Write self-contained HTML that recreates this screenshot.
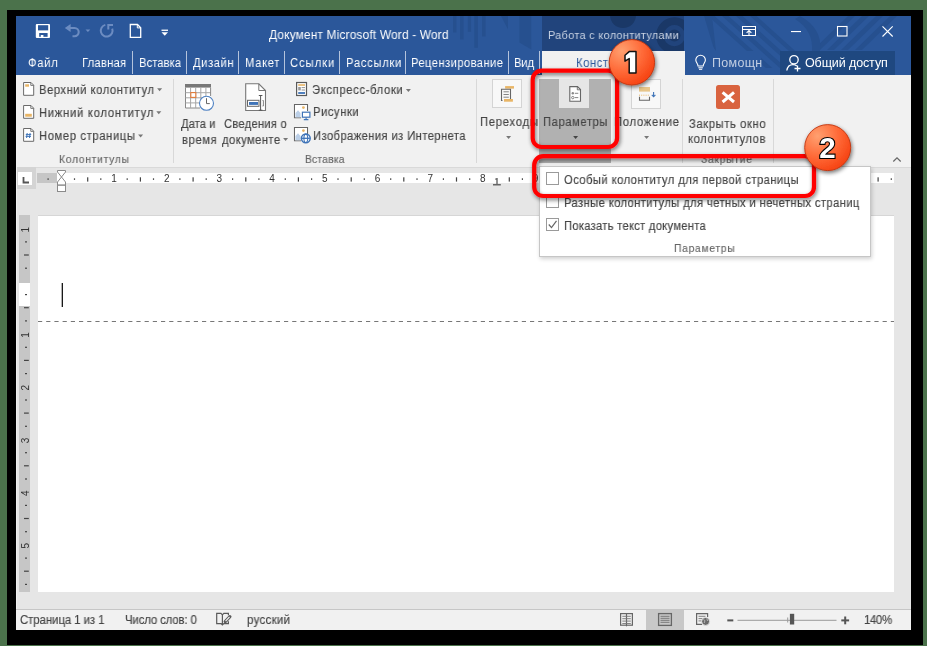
<!DOCTYPE html>
<html><head><meta charset="utf-8">
<style>
*{margin:0;padding:0;box-sizing:border-box}
html,body{width:927px;height:646px;overflow:hidden;background:#4b724b;font-family:"Liberation Sans",sans-serif;position:relative}
.a{position:absolute}
.t{position:absolute;white-space:nowrap;line-height:16px;height:16px;transform-origin:0 0;will-change:transform}
.k{-webkit-text-stroke:0.15px currentColor}
svg{position:absolute;overflow:visible}
</style></head><body>
<div class="a" style="left:7px;top:10px;width:916px;height:635px;background:#000"></div>
<div class="a" style="left:16px;top:16px;width:895px;height:614px;background:#e6e6e6"></div>
<div class="a" style="left:16px;top:16px;width:895px;height:59px;background:#2b579a"></div>
<svg style="left:0;top:0" width="927" height="646"><defs><clipPath id="tb"><rect x="16" y="16" width="895" height="59"/></clipPath>
<clipPath id="tb2"><rect x="16" y="16" width="895" height="35"/><rect x="761" y="51" width="19" height="17"/></clipPath><clipPath id="curv"><path d="M704,16 Q707,40 716,51 L716,68 L800,68 L800,16 Z"/></clipPath></defs>
<g clip-path="url(#tb)" fill="#26508f">
<rect x="453" y="16" width="3.5" height="16.5"/><rect x="460" y="16" width="3.6" height="23.5"/><rect x="467.8" y="16" width="3.3" height="15.8"/>
<rect x="474.3" y="16" width="3.6" height="31.8"/><rect x="482" y="16" width="3.6" height="20.5"/>
<polygon points="501,16 508,16 508,29.4"/>
<polygon points="519.4,16 531.3,16 531.3,49.6 519.4,42.5"/>
</g>
<g clip-path="url(#tb2)">
<g clip-path="url(#curv)" fill="#26508f">
<path d="M704,16 Q707,40 716,51 L800,51 L800,16 Z" fill="#26508f" opacity="0.0"/>
<polygon points="708,16 714.5,16 781.2,76 774.7,76"/>
<polygon points="722,16 728.5,16 795.2,76 788.7,76"/>
<polygon points="736,16 742.5,16 809.2,76 802.7,76"/>
<polygon points="750,16 756.5,16 823.2,76 816.7,76"/>
<polygon points="704,16 712,16 716,51 714.6,51" />
</g>
<polygon points="848,16 855,16 820,50 813,50" fill="#26508f"/>
<polygon points="862,16 869,16 834,50 827,50" fill="#26508f"/>
<polygon points="876,16 883,16 848,50 841,50" fill="#26508f"/>
<polygon points="890,16 897,16 862,50 855,50" fill="#26508f"/>
<path d="M800,16 C815,24 822,36 820,51 L812,51 C813,38 808,27 795,19 Z" fill="#26508f"/>
</g></svg>
<div class="a" style="left:542px;top:16px;width:142px;height:35px;background:#21447c"></div>
<svg style="left:0;top:0" width="927" height="646"><defs><clipPath id="ctxc"><rect x="542" y="16" width="142" height="35"/></clipPath></defs><g clip-path="url(#ctxc)" fill="#1a3867"><circle cx="623" cy="15" r="13"/><path d="M674.4,17.3 a18.3,18.3 0 1 0 0.01,0 Z M674.4,25 a10.6,10.6 0 1 1 -0.01,0 Z" fill-rule="evenodd"/><circle cx="674.4" cy="35.6" r="6"/></g></svg>
<div class="t" style="left:269.00px;top:27.40px;font-size:12.5px;color:#ffffff;letter-spacing:0.187px;transform:scaleX(0.95)">Документ Microsoft Word - Word</div>
<div class="t" style="left:547.65px;top:26.90px;font-size:11.5px;color:#c9d3e3;letter-spacing:0.318px;transform:scaleX(0.95)">Работа с колонтитулами</div>
<svg style="left:0;top:0" width="927" height="646">
<!-- save -->
<rect x="35.8" y="24" width="14.2" height="14" rx="1" fill="#fff"/>
<rect x="38" y="25.2" width="10.2" height="5.2" fill="#2b579a"/>
<rect x="39.2" y="33" width="8.4" height="3.8" fill="#2b579a"/>
<rect x="40.8" y="35" width="2.6" height="3" fill="#fff"/>
<!-- undo -->
<path d="M64.8,28 L70.6,24 V32 Z" fill="#6c8cc1"/>
<path d="M69.5,28 H74.6 A4.1,4.1 0 0 1 74.6,36.2 H72.5" fill="none" stroke="#6c8cc1" stroke-width="2.1"/>
<path d="M85.5,29.4 H90.3 L87.9,31.9 Z" fill="#6c8cc1"/>
<!-- redo circle -->
<path d="M105.3,24.9 A5.9,5.9 0 1 0 112.2,28.6" fill="none" stroke="#6c8cc1" stroke-width="2"/>
<path d="M108.3,29.6 V25 H113" fill="none" stroke="#6c8cc1" stroke-width="2"/>
<!-- new doc -->
<path d="M130.3,24.5 H137.5 L140.7,27.7 V37.3 H130.3 Z" fill="none" stroke="#fff" stroke-width="1.3"/>
<path d="M137.3,24.5 V27.9 H140.7" fill="none" stroke="#fff" stroke-width="1"/>
<!-- customize -->
<rect x="161.5" y="29.6" width="6.5" height="1.3" fill="#fff"/>
<path d="M161.5,32.2 H168 L164.75,35.8 Z" fill="#fff"/>
<!-- window controls -->
<rect x="742.5" y="26.5" width="13" height="9" fill="none" stroke="#fff" stroke-width="1"/>
<path d="M743,29.5 H755" stroke="#fff" stroke-width="1"/>
<path d="M749,35.5 V30.6 M746.6,32.9 L749,30.5 L751.4,32.9" fill="none" stroke="#fff" stroke-width="1.1"/>
<rect x="791" y="31" width="10" height="1.1" fill="#fff"/>
<rect x="837.5" y="26.5" width="9.5" height="9.5" fill="none" stroke="#fff" stroke-width="1.1"/>
<path d="M882.5,26.3 L892.7,36.5 M892.7,26.3 L882.5,36.5" stroke="#fff" stroke-width="1.1"/>
</svg>
<div class="t" style="left:28.40px;top:55.30px;font-size:12.5px;color:#ffffff;letter-spacing:0.778px;transform:scaleX(0.9)">Файл</div>
<div class="t" style="left:81.90px;top:55.30px;font-size:12.5px;color:#ffffff;letter-spacing:0.241px;transform:scaleX(0.9)">Главная</div>
<div class="t" style="left:138.60px;top:55.30px;font-size:12.5px;color:#ffffff;letter-spacing:0.056px;transform:scaleX(0.9)">Вставка</div>
<div class="t" style="left:192.90px;top:55.30px;font-size:12.5px;color:#ffffff;letter-spacing:0.622px;transform:scaleX(0.9)">Дизайн</div>
<div class="t" style="left:244.90px;top:55.30px;font-size:12.5px;color:#ffffff;letter-spacing:0.722px;transform:scaleX(0.9)">Макет</div>
<div class="t" style="left:290.30px;top:55.30px;font-size:12.5px;color:#ffffff;letter-spacing:1.044px;transform:scaleX(0.9)">Ссылки</div>
<div class="t" style="left:345.50px;top:55.30px;font-size:12.5px;color:#ffffff;letter-spacing:0.778px;transform:scaleX(0.9)">Рассылки</div>
<div class="t" style="left:411.40px;top:55.30px;font-size:12.5px;color:#ffffff;letter-spacing:0.436px;transform:scaleX(0.9)">Рецензирование</div>
<div class="t" style="left:514.40px;top:55.30px;font-size:12.5px;color:#ffffff;letter-spacing:-0.222px;transform:scaleX(0.9)">Вид</div>
<div class="a" style="left:131.9px;top:51px;width:1px;height:23px;background:#b4c3dc"></div>
<div class="a" style="left:186.2px;top:51px;width:1px;height:23px;background:#b4c3dc"></div>
<div class="a" style="left:238.3px;top:51px;width:1px;height:23px;background:#b4c3dc"></div>
<div class="a" style="left:284.3px;top:51px;width:1px;height:23px;background:#b4c3dc"></div>
<div class="a" style="left:339.2px;top:51px;width:1px;height:23px;background:#b4c3dc"></div>
<div class="a" style="left:405.4px;top:51px;width:1px;height:23px;background:#b4c3dc"></div>
<div class="a" style="left:508.1px;top:51px;width:1px;height:23px;background:#b4c3dc"></div>
<div class="a" style="left:539.2px;top:51px;width:1px;height:23px;background:#b4c3dc"></div>
<div class="a" style="left:542px;top:51px;width:143px;height:25px;background:#f1f1f1"></div>
<div class="t" style="left:576.10px;top:55.30px;font-size:12.5px;color:#2b579a;letter-spacing:0.600px;transform:scaleX(0.9)">Конструктор</div>
<svg style="left:0;top:0" width="927" height="646">
<path d="M698,66 C698,63.5 695.8,62.5 695.8,60 A4.8,4.8 0 0 1 705.4,60 C705.4,62.5 703.2,63.5 703.2,66 Z" fill="none" stroke="#fff" stroke-width="1.1"/>
<path d="M698.3,67.8 H702.9 M699,69.3 H702.2" stroke="#fff" stroke-width="1"/>
</svg>
<div class="t" style="left:711.50px;top:54.90px;font-size:12.5px;color:#c3cfe3;letter-spacing:0.300px;transform:scaleX(1.0)">Помощн</div>
<div class="a" style="left:780px;top:51px;width:115px;height:24px;background:#1f4880"></div>
<svg style="left:0;top:0" width="927" height="646">
<circle cx="794" cy="59.8" r="4.2" fill="none" stroke="#fff" stroke-width="1.3"/>
<path d="M786.8,70.5 C787.5,66.5 789.5,64.6 793,64.6 C794.8,64.6 796,65.2 796.8,66" fill="none" stroke="#fff" stroke-width="1.3"/>
<path d="M797.5,65.5 V71.5 M794.5,68.5 H800.5" stroke="#fff" stroke-width="1.3"/>
</svg>
<div class="t" style="left:805.00px;top:54.90px;font-size:12.5px;color:#ffffff;letter-spacing:-0.109px;transform:scaleX(1.0)">Общий доступ</div>
<div class="a" style="left:16px;top:75px;width:895px;height:93px;background:#f1f1f1;border-bottom:1px solid #d9d9d9"></div>
<div class="a" style="left:173.0px;top:79px;width:1px;height:84px;background:#d8d8d8"></div>
<div class="a" style="left:475.8px;top:79px;width:1px;height:84px;background:#d8d8d8"></div>
<div class="a" style="left:681.9px;top:79px;width:1px;height:84px;background:#d8d8d8"></div>
<div class="a" style="left:772.7px;top:79px;width:1px;height:84px;background:#d8d8d8"></div>
<div class="t k" style="left:39.30px;top:82.00px;font-size:12.5px;color:#444444;letter-spacing:0.569px;transform:scaleX(0.9)">Верхний колонтитул</div>
<div class="t k" style="left:39.30px;top:104.50px;font-size:12.5px;color:#444444;letter-spacing:0.806px;transform:scaleX(0.9)">Нижний колонтитул</div>
<div class="t k" style="left:39.30px;top:127.80px;font-size:12.5px;color:#444444;letter-spacing:0.675px;transform:scaleX(0.9)">Номер страницы</div>
<div class="t k" style="left:58.60px;top:151.00px;font-size:11.5px;color:#666666;letter-spacing:0.778px;transform:scaleX(0.9)">Колонтитулы</div>
<div class="t k" style="left:181.20px;top:115.90px;font-size:12.5px;color:#444444;letter-spacing:0.022px;transform:scaleX(0.9)">Дата и</div>
<div class="t k" style="left:181.60px;top:131.90px;font-size:12.5px;color:#444444;letter-spacing:0.667px;transform:scaleX(0.9)">время</div>
<div class="t k" style="left:223.60px;top:115.90px;font-size:12.5px;color:#444444;letter-spacing:0.235px;transform:scaleX(0.9)">Сведения о</div>
<div class="t k" style="left:222.00px;top:131.90px;font-size:12.5px;color:#444444;letter-spacing:0.458px;transform:scaleX(0.9)">документе</div>
<div class="t k" style="left:312.00px;top:81.50px;font-size:12.5px;color:#444444;letter-spacing:0.709px;transform:scaleX(0.9)">Экспресс-блоки</div>
<div class="t k" style="left:312.80px;top:104.40px;font-size:12.5px;color:#444444;letter-spacing:0.593px;transform:scaleX(0.9)">Рисунки</div>
<div class="t k" style="left:312.80px;top:127.70px;font-size:12.5px;color:#444444;letter-spacing:0.430px;transform:scaleX(0.9)">Изображения из Интернета</div>
<div class="t k" style="left:304.60px;top:150.50px;font-size:11.5px;color:#666666;letter-spacing:0.185px;transform:scaleX(0.9)">Вставка</div>
<svg style="left:0;top:0" width="927" height="646"><path d="M157.1,88.2 H162.1 L159.6,91.2 Z" fill="#777"/><path d="M156.3,111.3 H161.3 L158.8,114.3 Z" fill="#777"/><path d="M138.1,134.6 H143.1 L140.6,137.6 Z" fill="#777"/><path d="M283.1,138.1 H288.1 L285.6,141.1 Z" fill="#777"/><path d="M405.9,89.0 H410.9 L408.4,92.0 Z" fill="#777"/><path d="M23.6,82.5 H31 L33.7,85.2 V95.3 H23.6 Z" fill="#fff" stroke="#6a6a6a" stroke-width="1"/><path d="M30.8,82.5 V85.4 H33.7" fill="none" stroke="#6a6a6a" stroke-width="0.9"/><path d="M23.6,105.5 H31 L33.7,108.2 V118.3 H23.6 Z" fill="#fff" stroke="#6a6a6a" stroke-width="1"/><path d="M30.8,105.5 V108.4 H33.7" fill="none" stroke="#6a6a6a" stroke-width="0.9"/><path d="M23.6,128.5 H31 L33.7,131.2 V141.3 H23.6 Z" fill="#fff" stroke="#6a6a6a" stroke-width="1"/><path d="M30.8,128.5 V131.4 H33.7" fill="none" stroke="#6a6a6a" stroke-width="0.9"/><rect x="25.2" y="84.3" width="3.8" height="2.4" fill="#e8b566"/><rect x="25.2" y="113.8" width="6.6" height="2.9" fill="#e8b566"/><path d="M27.2,133 L26.6,138 M30.1,133 L29.5,138 M25.8,134.6 H31.2 M25.6,136.4 H31" stroke="#3f74b8" stroke-width="1"/><rect x="185.5" y="87" width="25.2" height="21" fill="#fff"/><rect x="185" y="84" width="26" height="3.6" fill="#777"/><path d="M185.5,87.5 V108 H200 M185,108.5" fill="none" stroke="#888" stroke-width="1"/><path d="M190.6,87.6 V108" stroke="#a6a6a6" stroke-width="1"/><path d="M195.7,87.6 V108" stroke="#a6a6a6" stroke-width="1"/><path d="M200.8,87.6 V108" stroke="#a6a6a6" stroke-width="1"/><path d="M205.9,87.6 V108" stroke="#a6a6a6" stroke-width="1"/><path d="M185.5,92.7 H211" stroke="#a6a6a6" stroke-width="1"/><path d="M185.5,97.8 H211" stroke="#a6a6a6" stroke-width="1"/><path d="M185.5,102.9 H211" stroke="#a6a6a6" stroke-width="1"/><path d="M210.6,87.6 V96" stroke="#888" stroke-width="1"/><rect x="190.8" y="92.6" width="5" height="4.8" fill="#fff" stroke="#e07b39" stroke-width="1.1"/><circle cx="206.5" cy="103.3" r="7" fill="#fff" stroke="#4f82c3" stroke-width="1.1"/><path d="M206.5,98.2 V103.6 H209.8" fill="none" stroke="#666" stroke-width="1"/><path d="M245.7,83.8 H258.8 L265.5,90.5 V110.5 H245.7 Z" fill="#fff" stroke="#777" stroke-width="1.1"/><path d="M258.8,83.8 V90.5 H265.5" fill="none" stroke="#777" stroke-width="1"/><rect x="247.5" y="100.3" width="11.5" height="6" fill="#fff" stroke="#666" stroke-width="1"/><rect x="249" y="102" width="9" height="2.9" fill="#3f74b8"/><path d="M258.8,95.5 H262.4 M260.6,95.5 V110.2 M258.8,110.2 H262.4" fill="none" stroke="#555" stroke-width="1"/><path d="M262.5,100.5 H263.4 V106 H262.5" fill="none" stroke="#777" stroke-width="0.9"/><rect x="296.6" y="82.5" width="9.9" height="13" fill="#fff" stroke="#5a5a5a" stroke-width="1.2"/><rect x="298.2" y="84.2" width="6.8" height="1.6" fill="#e8b566"/><rect x="298.2" y="87" width="2.6" height="3.4" fill="#999"/><path d="M301.6,87.6 H305 M301.6,90 H305" stroke="#888" stroke-width="0.9"/><rect x="298.2" y="92.1" width="6.8" height="1.8" fill="#3f74b8"/><path d="M301,117.7 H294.5 V104.5 H307.5 V111" fill="#fff" stroke="#666" stroke-width="1.1"/><rect x="295.1" y="105.1" width="11.8" height="12" fill="#fff"/><circle cx="303.4" cy="107.6" r="1.4" fill="#e8b566"/><path d="M295.5,117.2 V113 L298,110.2 L300.5,113 V117.2 Z" fill="#bcd0e8"/><path d="M301,140.7 H294.5 V127.5 H307.5 V134" fill="#fff" stroke="#666" stroke-width="1.1"/><rect x="295.1" y="128.1" width="11.8" height="12" fill="#fff"/><circle cx="303.4" cy="130.6" r="1.4" fill="#e8b566"/><path d="M295.5,140.2 V136 L298,133.2 L300.5,136 V140.2 Z" fill="#bcd0e8"/><rect x="302.4" y="112.2" width="7.5" height="5" fill="#fff" stroke="#3f74b8" stroke-width="1.2"/><path d="M306.1,117.5 V119.3 M303.8,119.6 H308.4" stroke="#3f74b8" stroke-width="1.1"/><circle cx="305.8" cy="138.3" r="4.4" fill="#fff" stroke="#3f74b8" stroke-width="1.5"/><path d="M301.8,138.3 H309.8" stroke="#3f74b8" stroke-width="1.3"/><ellipse cx="305.8" cy="138.3" rx="1.9" ry="4.2" fill="none" stroke="#3f74b8" stroke-width="1.1"/></svg>
<div class="a" style="left:492.4px;top:79.3px;width:29.4px;height:29px;background:#f8f8f8;border:1px solid #d4d4d4"></div>
<div class="a" style="left:631.2px;top:79.3px;width:29.4px;height:29.5px;background:#f8f8f8;border:1px solid #d4d4d4"></div>
<div class="a" style="left:539.4px;top:79px;width:71.4px;height:84px;background:#b1b1b1"></div>
<div class="a" style="left:559.4px;top:79px;width:29.2px;height:29.3px;background:#e6e6e6"></div>
<div class="t k" style="left:479.60px;top:113.80px;font-size:12.5px;color:#444444;letter-spacing:0.825px;transform:scaleX(0.9)">Переходы</div>
<div class="t k" style="left:542.70px;top:113.80px;font-size:12.5px;color:#444444;letter-spacing:0.611px;transform:scaleX(0.9)">Параметры</div>
<div class="t k" style="left:614.00px;top:113.80px;font-size:12.5px;color:#444444;letter-spacing:0.778px;transform:scaleX(0.9)">Положение</div>
<div class="t k" style="left:688.90px;top:115.80px;font-size:12.5px;color:#444444;letter-spacing:0.657px;transform:scaleX(0.9)">Закрыть окно</div>
<div class="t k" style="left:688.30px;top:131.30px;font-size:12.5px;color:#444444;letter-spacing:0.626px;transform:scaleX(0.9)">колонтитулов</div>
<div class="t k" style="left:701.10px;top:150.50px;font-size:11.5px;color:#666666;letter-spacing:0.794px;transform:scaleX(0.9)">Закрытие</div>
<svg style="left:0;top:0" width="927" height="646"><path d="M506.1,136.1 H511.1 L508.6,139.1 Z" fill="#777"/><path d="M573.1,136.1 H578.1 L575.6,139.1 Z" fill="#444"/><path d="M644.1,136.1 H649.1 L646.6,139.1 Z" fill="#777"/><rect x="505.1" y="86.1" width="8.9" height="2.5" fill="#e8b566"/><rect x="504" y="99" width="8.9" height="2.7" fill="#e8b566"/><path d="M502.5,100.5 H501.5 V89.3 H510.5 V99" fill="none" stroke="#666" stroke-width="1.1"/><path d="M503.5,91.8 H508.8 M503.5,94.5 H508.8 M503.5,97.2 H508.8" stroke="#777" stroke-width="0.9"/><path d="M569.8,86.6 H577.5 L580.5,89.6 V101.2 H569.8 Z" fill="#fff" stroke="#666" stroke-width="1.1"/><path d="M577.3,86.6 V89.8 H580.5" fill="none" stroke="#666" stroke-width="0.9"/><circle cx="572.8" cy="93.3" r="1.2" fill="#888"/><circle cx="572.8" cy="97.6" r="1.2" fill="none" stroke="#777" stroke-width="0.9"/><path d="M574.8,93.3 H578.3 M574.8,97.6 H578.3" stroke="#777" stroke-width="0.9"/><rect x="639" y="87" width="11" height="4.6" fill="#e8c68a"/><path d="M639,95.2 H650" stroke="#e8b566" stroke-width="1" stroke-dasharray="1,1.2"/><path d="M639.5,96.8 V100.3 H649.5 V96.8" fill="none" stroke="#666" stroke-width="1.1"/><path d="M653.6,92 V96.5 M651.8,94.8 L653.6,96.8 L655.4,94.8" fill="none" stroke="#3f74b8" stroke-width="1.1"/><rect x="716" y="85.1" width="24" height="24" rx="2.5" fill="#d9633f"/><path d="M722.6,92.3 L734,102 M734,92.3 L722.6,102" stroke="#fff" stroke-width="3"/><path d="M893.3,161.5 L897,157.8 L900.7,161.5" fill="none" stroke="#666" stroke-width="1.2"/></svg>
<div class="a" style="left:17px;top:167.3px;width:18.8px;height:21.3px;background:#d4d4d4"></div>
<div class="a" style="left:18px;top:172px;width:14px;height:13px;background:#fff"></div>
<div class="a" style="left:16px;top:167px;width:1px;height:442px;background:#f0f0f0"></div>
<div class="a" style="left:37px;top:173px;width:20px;height:10px;background:#c6c6c6"></div>
<div class="a" style="left:57px;top:173px;width:837px;height:10px;background:#fff"></div>
<div class="a" style="left:19px;top:215px;width:11px;height:377px;background:#c6c6c6"></div>
<div class="a" style="left:19px;top:282.5px;width:11px;height:23px;background:#fff"></div>
<div class="a" style="left:38px;top:216px;width:856px;height:376px;background:#fff"></div>
<div class="a" style="left:38px;top:215px;width:856px;height:1px;background:#d6d6d6"></div>
<svg style="left:0;top:0" width="927" height="646"><path d="M23.5,177 V182.5 H29" fill="none" stroke="#555" stroke-width="1.8"/><rect x="47.5" y="178.3" width="1.2" height="1.6" fill="#444"/><rect x="73.9" y="178.3" width="1.2" height="1.6" fill="#444"/><rect x="87.1" y="177.3" width="1.2" height="4.3" fill="#444"/><rect x="100.2" y="178.3" width="1.2" height="1.6" fill="#444"/><text x="114.0" y="181.8" font-family="Liberation Sans" font-size="10" fill="#333" text-anchor="middle">1</text><rect x="126.6" y="178.3" width="1.2" height="1.6" fill="#444"/><rect x="139.8" y="177.3" width="1.2" height="4.3" fill="#444"/><rect x="152.9" y="178.3" width="1.2" height="1.6" fill="#444"/><text x="166.7" y="181.8" font-family="Liberation Sans" font-size="10" fill="#333" text-anchor="middle">2</text><rect x="179.3" y="178.3" width="1.2" height="1.6" fill="#444"/><rect x="192.5" y="177.3" width="1.2" height="4.3" fill="#444"/><rect x="205.6" y="178.3" width="1.2" height="1.6" fill="#444"/><text x="219.4" y="181.8" font-family="Liberation Sans" font-size="10" fill="#333" text-anchor="middle">3</text><rect x="232.0" y="178.3" width="1.2" height="1.6" fill="#444"/><rect x="245.2" y="177.3" width="1.2" height="4.3" fill="#444"/><rect x="258.3" y="178.3" width="1.2" height="1.6" fill="#444"/><text x="272.1" y="181.8" font-family="Liberation Sans" font-size="10" fill="#333" text-anchor="middle">4</text><rect x="284.7" y="178.3" width="1.2" height="1.6" fill="#444"/><rect x="297.8" y="177.3" width="1.2" height="4.3" fill="#444"/><rect x="311.0" y="178.3" width="1.2" height="1.6" fill="#444"/><text x="324.8" y="181.8" font-family="Liberation Sans" font-size="10" fill="#333" text-anchor="middle">5</text><rect x="337.4" y="178.3" width="1.2" height="1.6" fill="#444"/><rect x="350.6" y="177.3" width="1.2" height="4.3" fill="#444"/><rect x="363.7" y="178.3" width="1.2" height="1.6" fill="#444"/><text x="377.5" y="181.8" font-family="Liberation Sans" font-size="10" fill="#333" text-anchor="middle">6</text><rect x="390.1" y="178.3" width="1.2" height="1.6" fill="#444"/><rect x="403.2" y="177.3" width="1.2" height="4.3" fill="#444"/><rect x="416.4" y="178.3" width="1.2" height="1.6" fill="#444"/><text x="430.2" y="181.8" font-family="Liberation Sans" font-size="10" fill="#333" text-anchor="middle">7</text><rect x="442.8" y="178.3" width="1.2" height="1.6" fill="#444"/><rect x="455.9" y="177.3" width="1.2" height="4.3" fill="#444"/><rect x="469.1" y="178.3" width="1.2" height="1.6" fill="#444"/><text x="482.9" y="181.8" font-family="Liberation Sans" font-size="10" fill="#333" text-anchor="middle">8</text><rect x="495.5" y="178.3" width="1.2" height="1.6" fill="#444"/><rect x="508.7" y="177.3" width="1.2" height="4.3" fill="#444"/><rect x="521.8" y="178.3" width="1.2" height="1.6" fill="#444"/><text x="535.6" y="181.8" font-family="Liberation Sans" font-size="10" fill="#333" text-anchor="middle">9</text><rect x="548.2" y="178.3" width="1.2" height="1.6" fill="#444"/><rect x="561.4" y="177.3" width="1.2" height="4.3" fill="#444"/><rect x="574.5" y="178.3" width="1.2" height="1.6" fill="#444"/><text x="588.3" y="181.8" font-family="Liberation Sans" font-size="10" fill="#333" text-anchor="middle">10</text><rect x="600.9" y="178.3" width="1.2" height="1.6" fill="#444"/><rect x="614.0" y="177.3" width="1.2" height="4.3" fill="#444"/><rect x="627.2" y="178.3" width="1.2" height="1.6" fill="#444"/><text x="641.0" y="181.8" font-family="Liberation Sans" font-size="10" fill="#333" text-anchor="middle">11</text><rect x="653.6" y="178.3" width="1.2" height="1.6" fill="#444"/><rect x="666.8" y="177.3" width="1.2" height="4.3" fill="#444"/><rect x="679.9" y="178.3" width="1.2" height="1.6" fill="#444"/><text x="693.7" y="181.8" font-family="Liberation Sans" font-size="10" fill="#333" text-anchor="middle">12</text><rect x="706.3" y="178.3" width="1.2" height="1.6" fill="#444"/><rect x="719.4" y="177.3" width="1.2" height="4.3" fill="#444"/><rect x="732.6" y="178.3" width="1.2" height="1.6" fill="#444"/><text x="746.4" y="181.8" font-family="Liberation Sans" font-size="10" fill="#333" text-anchor="middle">13</text><rect x="759.0" y="178.3" width="1.2" height="1.6" fill="#444"/><rect x="772.1" y="177.3" width="1.2" height="4.3" fill="#444"/><rect x="785.3" y="178.3" width="1.2" height="1.6" fill="#444"/><text x="799.1" y="181.8" font-family="Liberation Sans" font-size="10" fill="#333" text-anchor="middle">14</text><rect x="811.7" y="178.3" width="1.2" height="1.6" fill="#444"/><rect x="824.9" y="177.3" width="1.2" height="4.3" fill="#444"/><rect x="838.0" y="178.3" width="1.2" height="1.6" fill="#444"/><text x="851.8" y="181.8" font-family="Liberation Sans" font-size="10" fill="#333" text-anchor="middle">15</text><rect x="864.4" y="178.3" width="1.2" height="1.6" fill="#444"/><rect x="877.5" y="177.3" width="1.2" height="4.3" fill="#444"/><rect x="890.7" y="178.3" width="1.2" height="1.6" fill="#444"/><path d="M57.5,170.5 H65.5 V172 L61.5,177 L65.5,182 V185 H57.5 V182 L61.5,177 L57.5,172 Z" fill="#fff" stroke="#8a8a8a" stroke-width="1"/><rect x="57.5" y="185.3" width="8" height="6.2" fill="#fff" stroke="#8a8a8a" stroke-width="1"/><text x="0" y="0" transform="translate(28.6,229.6) rotate(-90)" font-family="Liberation Sans" font-size="10" fill="#333" text-anchor="middle">1</text><rect x="25" y="241.3" width="2" height="1.2" fill="#444"/><rect x="24" y="254.4" width="4.8" height="1.2" fill="#444"/><rect x="25" y="267.6" width="2" height="1.2" fill="#444"/><rect x="25" y="294.0" width="2" height="1.2" fill="#444"/><rect x="24" y="307.1" width="4.8" height="1.2" fill="#444"/><rect x="25" y="320.3" width="2" height="1.2" fill="#444"/><text x="0" y="0" transform="translate(28.6,335.0) rotate(-90)" font-family="Liberation Sans" font-size="10" fill="#333" text-anchor="middle">1</text><rect x="25" y="346.7" width="2" height="1.2" fill="#444"/><rect x="24" y="359.8" width="4.8" height="1.2" fill="#444"/><rect x="25" y="373.0" width="2" height="1.2" fill="#444"/><text x="0" y="0" transform="translate(28.6,387.7) rotate(-90)" font-family="Liberation Sans" font-size="10" fill="#333" text-anchor="middle">2</text><rect x="25" y="399.4" width="2" height="1.2" fill="#444"/><rect x="24" y="412.5" width="4.8" height="1.2" fill="#444"/><rect x="25" y="425.7" width="2" height="1.2" fill="#444"/><text x="0" y="0" transform="translate(28.6,440.4) rotate(-90)" font-family="Liberation Sans" font-size="10" fill="#333" text-anchor="middle">3</text><rect x="25" y="452.1" width="2" height="1.2" fill="#444"/><rect x="24" y="465.2" width="4.8" height="1.2" fill="#444"/><rect x="25" y="478.4" width="2" height="1.2" fill="#444"/><text x="0" y="0" transform="translate(28.6,493.1) rotate(-90)" font-family="Liberation Sans" font-size="10" fill="#333" text-anchor="middle">4</text><rect x="25" y="504.8" width="2" height="1.2" fill="#444"/><rect x="24" y="517.9" width="4.8" height="1.2" fill="#444"/><rect x="25" y="531.1" width="2" height="1.2" fill="#444"/><text x="0" y="0" transform="translate(28.6,545.8) rotate(-90)" font-family="Liberation Sans" font-size="10" fill="#333" text-anchor="middle">5</text><rect x="25" y="557.5" width="2" height="1.2" fill="#444"/><rect x="24" y="570.6" width="4.8" height="1.2" fill="#444"/><rect x="25" y="583.8" width="2" height="1.2" fill="#444"/><path d="M497,178 V184.7 M493,184.8 H500.8" fill="none" stroke="#666" stroke-width="1.4"/><rect x="61.7" y="283" width="1.2" height="24" fill="#000"/><path d="M38,321.5 H894" stroke="#777" stroke-width="1" stroke-dasharray="4.2,4"/></svg>
<div class="a" style="left:16px;top:609px;width:895px;height:21px;background:#f1f1f1;border-top:1px solid #c6c6c6"></div>
<div class="a" style="left:646px;top:610px;width:38px;height:20px;background:#c8c8c8"></div>
<div class="t k" style="left:20.45px;top:612.20px;font-size:12px;color:#444444;letter-spacing:-0.071px;transform:scaleX(0.95)">Страница 1 из 1</div>
<div class="t k" style="left:124.65px;top:612.20px;font-size:12px;color:#444444;letter-spacing:-0.149px;transform:scaleX(0.95)">Число слов: 0</div>
<div class="t k" style="left:246.65px;top:612.20px;font-size:12px;color:#444444;letter-spacing:0.377px;transform:scaleX(0.95)">русский</div>
<div class="t k" style="left:863.55px;top:612.20px;font-size:12px;color:#444444;letter-spacing:-0.368px;transform:scaleX(0.95)">140%</div>
<svg style="left:0;top:0" width="927" height="646"><path d="M222.4,614.8 L221,613.4 H216.7 V623.6 H221 L222.4,625 L223.8,623.6 H228.4 V621.2 M222.4,614.8 L223.8,613.4 H228.4 V615.2 M222.4,614.8 V625.2" fill="none" stroke="#5a5a5a" stroke-width="1.2"/><path d="M225.2,621.6 L229.9,616.6" stroke="#5a5a5a" stroke-width="3.2" stroke-linecap="round"/><path d="M225.6,621.2 L229.5,617" stroke="#f1f1f1" stroke-width="1.2"/><rect x="620.6" y="613.6" width="11.8" height="11.6" fill="none" stroke="#666" stroke-width="1.2"/><path d="M626.5,613.6 V626.3" stroke="#666" stroke-width="1.2"/><path d="M622.3,616.3 H630.8 M622.3,618.7 H630.8 M622.3,621.1 H630.8 M622.3,623.5 H630.8" stroke="#777" stroke-width="0.9"/><rect x="658.6" y="613.6" width="12.8" height="11.8" fill="none" stroke="#666" stroke-width="1.3"/><path d="M660.5,616.3 H669.5 M660.5,618.3 H669.5 M660.5,620.3 H669.5 M660.5,622.3 H669.5" stroke="#777" stroke-width="1"/><path d="M702,624.3 H696.6 V613.6 H707.6 V617" fill="none" stroke="#666" stroke-width="1.2"/><path d="M698.5,616.3 H705.5 M698.5,618.6 H703 M698.5,620.9 H701.5" stroke="#777" stroke-width="0.9"/><circle cx="705.6" cy="621.4" r="4" fill="#6a6a6a" stroke="#f1f1f1" stroke-width="0.8"/><path d="M703.3,619.5 L705,620.6 L704.2,623 M706.8,618.6 L707.6,621" fill="none" stroke="#bbb" stroke-width="0.9"/><rect x="727.3" y="619.4" width="6" height="2" fill="#555"/><rect x="737.5" y="619.8" width="99" height="1" fill="#999"/><rect x="787.2" y="617.5" width="1" height="5" fill="#999"/><rect x="789.9" y="613.8" width="4.3" height="10.7" fill="#555"/><rect x="841.3" y="619.4" width="7.8" height="2" fill="#555"/><rect x="844.2" y="616.5" width="2" height="7.8" fill="#555"/></svg>
<div class="a" style="left:539px;top:166px;width:332px;height:91px;background:#fff;border:1px solid #c6c6c6;box-shadow:1px 2px 4px rgba(0,0,0,0.18)"></div>
<svg style="left:0;top:0" width="927" height="646"><rect x="546.5" y="172.5" width="12" height="12" fill="#fff" stroke="#9a9a9a" stroke-width="1"/><rect x="546.5" y="195.5" width="12" height="12" fill="#fff" stroke="#9a9a9a" stroke-width="1"/><rect x="546.5" y="218.5" width="12" height="12" fill="#fff" stroke="#9a9a9a" stroke-width="1"/><path d="M548.8,224.5 L551.5,227.6 L556.5,220.8" fill="none" stroke="#666" stroke-width="1.2"/></svg>
<div class="t k" style="left:563.80px;top:172.10px;font-size:12.5px;color:#444444;letter-spacing:0.466px;transform:scaleX(0.9)">Особый колонтитул для первой страницы</div>
<div class="t k" style="left:563.80px;top:195.10px;font-size:12.5px;color:#444444;letter-spacing:0.407px;transform:scaleX(0.9)">Разные колонтитулы для четных и нечетных страниц</div>
<div class="t k" style="left:563.80px;top:217.90px;font-size:12.5px;color:#444444;letter-spacing:0.275px;transform:scaleX(0.9)">Показать текст документа</div>
<div class="t k" style="left:673.70px;top:240.40px;font-size:11.5px;color:#666666;letter-spacing:0.764px;transform:scaleX(0.9)">Параметры</div>
<svg style="left:0;top:0" width="927" height="646"><defs><filter id="sh" x="-20%" y="-20%" width="140%" height="140%"><feGaussianBlur in="SourceAlpha" stdDeviation="2.2"/><feOffset dx="1" dy="2" result="b"/><feComponentTransfer><feFuncA type="linear" slope="0.55"/></feComponentTransfer><feMerge><feMergeNode/><feMergeNode in="SourceGraphic"/></feMerge></filter><radialGradient id="cg" cx="0.28" cy="0.25" r="0.9"><stop offset="0" stop-color="#ffa070"/><stop offset="0.5" stop-color="#ff6a38"/><stop offset="1" stop-color="#f43a0a"/></radialGradient></defs><g filter="url(#sh)"><rect x="532.7" y="70.6" width="84.4" height="76.4" rx="9" fill="none" stroke="#ff0000" stroke-width="4.2"/><rect x="534.2" y="156.1" width="279.8" height="39.9" rx="9" fill="none" stroke="#ff0000" stroke-width="4.2"/></g><g filter="url(#sh)"><circle cx="631.9" cy="62.3" r="22.7" fill="url(#cg)" stroke="#c0340e" stroke-width="0.9"/><circle cx="827.7" cy="147.6" r="23" fill="url(#cg)" stroke="#c0340e" stroke-width="0.9"/></g><path d="M629.2,51.6 H636 V73 H629.2 V58.6 L625,61.1 V55.2 Z" fill="#fff" stroke="#111" stroke-width="1.5" stroke-linejoin="round"/><text x="827.4" y="158.3" font-family="Liberation Sans" font-weight="bold" font-size="29.5" fill="#fff" stroke="#000" stroke-width="2.2" paint-order="stroke" text-anchor="middle">2</text></svg>

</body></html>
